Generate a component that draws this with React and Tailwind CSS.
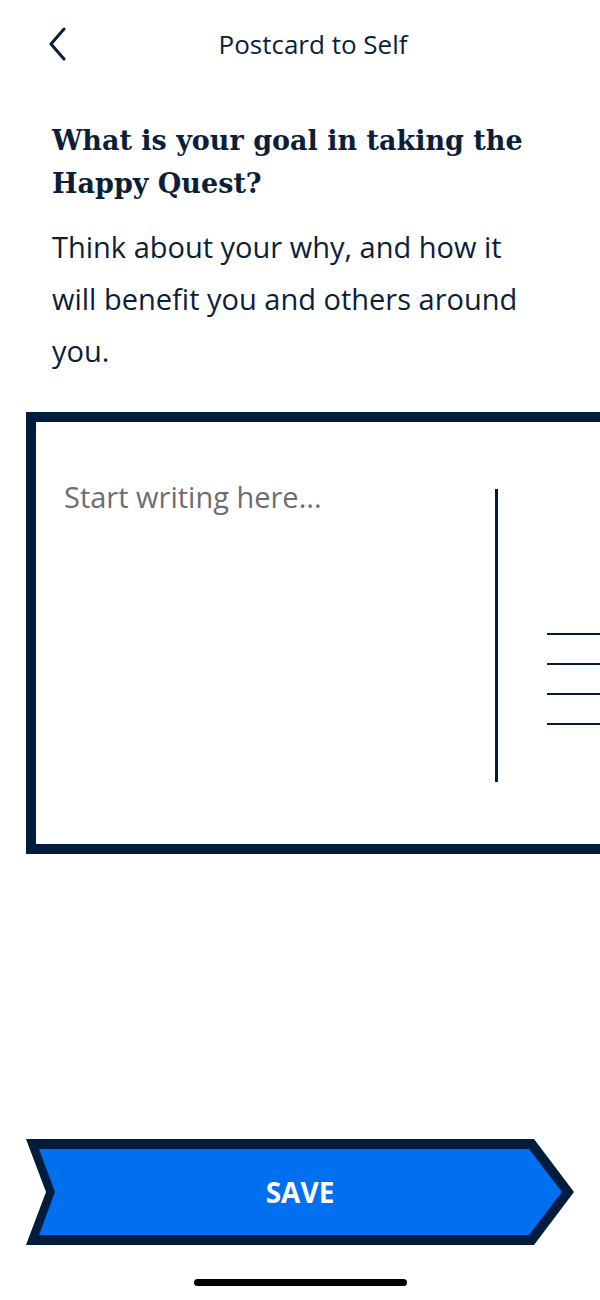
import React from 'react'

const NAVY = '#011c3c'

const App = () => {
  return (
    <div className="w-[600px] h-[1300px] bg-white overflow-hidden flex flex-col" style={{ fontFamily: '"Open Sans", sans-serif' }}>
      {/* Header */}
      <div className="h-[88px] flex items-center pl-[46px] pr-[42px]">
        <button className="w-[22px] h-[34px] flex items-center justify-center text-[#0b1f3a]">
          <svg width="20" height="34" viewBox="0 0 20 34" fill="none" stroke="currentColor">
            <path d="M17 2L4 17l13 15" strokeWidth="3" strokeLinecap="round" strokeLinejoin="round" />
          </svg>
        </button>
        <h1 className="flex-1 text-center text-[26px] font-medium text-[#0b1f3a]">Postcard to Self</h1>
      </div>

      {/* Prompt */}
      <div className="pl-[52px] pr-[60px] mt-[31px]">
        <h2 className="text-[27px] leading-[43px] font-bold text-[#0b1f3a]" style={{ fontFamily: '"DejaVu Serif", serif' }}>
          What is your goal in taking the Happy Quest?
        </h2>
        <p className="mt-[16px] text-[29px] leading-[52px] text-[#0b1f3a]">
          Think about your why, and how it will benefit you and others around you.
        </p>
      </div>

      {/* Postcard */}
      <div className="mt-[35px] ml-[26px] w-[620px] h-[442px] shrink-0 border-[10px] border-[#011c3c] flex">
        <div className="w-[459px] pl-[28px] pt-[56px]">
          <textarea
            className="w-full h-[300px] resize-none outline-none text-[29px] leading-[38px] text-[#0b1f3a] placeholder:text-[#6e6e6e]"
            placeholder="Start writing here..."
          />
        </div>
        <div className="w-[3px] h-[293px] mt-[67px] bg-[#011c3c]" />
        <div className="ml-[49px] mt-[211px] flex flex-col gap-[28px]">
          <div className="w-[80px] h-[2px] bg-[#011c3c]" />
          <div className="w-[80px] h-[2px] bg-[#011c3c]" />
          <div className="w-[80px] h-[2px] bg-[#011c3c]" />
          <div className="w-[80px] h-[2px] bg-[#011c3c]" />
        </div>
      </div>

      {/* Save button */}
      <button className="relative mt-[285px] w-[600px] h-[106px] shrink-0">
        <svg className="block" width="600" height="106" viewBox="0 0 600 106">
          <polygon points="26,0 534,0 574,53 534,106 26,106 46,53" fill={NAVY} />
          <polygon points="39,10 529,10 562,53 529,96 39,96 55,53" fill="#0070f0" />
        </svg>
        <span className="absolute inset-0 flex items-center justify-center text-white text-[28px] font-bold">
          SAVE
        </span>
      </button>

      {/* Home indicator */}
      <div className="mt-[34px] mx-auto w-[213px] h-[7px] rounded-full bg-black" />
    </div>
  )
}

export default App
